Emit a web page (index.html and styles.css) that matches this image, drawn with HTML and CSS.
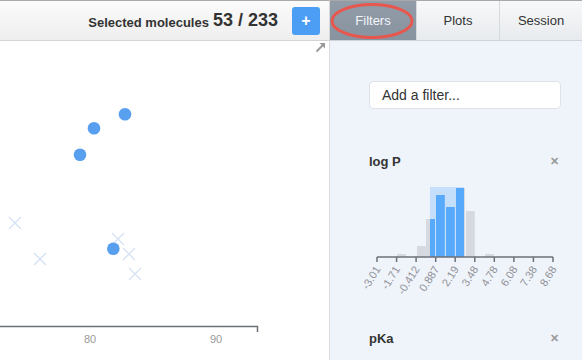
FILE: index.html
```html
<!DOCTYPE html>
<html>
<head>
<meta charset="utf-8">
<link rel="stylesheet" href="styles.css">
</head>
<body>
<div class="app">
  <div class="topbar">
    <span class="sel-label">Selected molecules</span>
    <span class="sel-count">53 / 233</span>
    <button class="add-btn">+</button>
  </div>
  <div class="tabs">
    <div class="tab active">Filters
      <svg class="ring" width="86" height="38" viewBox="0 0 86 38"><ellipse cx="42" cy="19" rx="40" ry="16.5" fill="none" stroke="#e8574d" stroke-width="3"/></svg>
    </div>
    <div class="tab">Plots</div>
    <div class="tab">Session</div>
  </div>
  <div class="plot">
    <svg class="expand" width="11" height="11" viewBox="0 0 11 11"><path d="M1.5 9.5 L8 3" stroke="#9a9a9a" stroke-width="2"/><path d="M4.5 1 H10 V6.5 Z" fill="#9a9a9a"/></svg>
    <svg class="scatter" width="329" height="319" viewBox="0 0 329 319">
      <g stroke="#d4e2f4" stroke-width="1.4">
        <path d="M9 176 l12 12 M21 176 l-12 12"/>
        <path d="M34 212 l12 12 M46 212 l-12 12"/>
        <path d="M112 192 l12 12 M124 192 l-12 12"/>
        <path d="M123 207 l12 12 M135 207 l-12 12"/>
        <path d="M129 227 l12 12 M141 227 l-12 12"/>
      </g>
      <g fill="#58a0ef">
        <circle cx="125" cy="73.3" r="6.3"/>
        <circle cx="94" cy="87.3" r="6.3"/>
        <circle cx="80" cy="113.7" r="6.3"/>
        <circle cx="113.3" cy="207.7" r="6.3"/>
      </g>
      <path d="M0 285.5 H257.5 V291" fill="none" stroke="#6d7078" stroke-width="1.5"/>
      <g fill="#9a9a9a" font-size="11" text-anchor="middle" font-family="Liberation Sans, Arial, sans-serif">
        <text x="90" y="302">80</text>
        <text x="216" y="302">90</text>
      </g>
    </svg>
  </div>
  <div class="panel">
    <div class="filter-input">Add a filter...</div>
    <div class="filter">
      <div class="filter-head"><span class="filter-name">log P</span><span class="close">✕</span></div>
      <svg class="hist" width="192" height="120" viewBox="0 0 192 120">
        <g fill="#d6dae0">
          <rect x="28" y="79" width="8.8" height="3"/>
          <rect x="48" y="71" width="8.8" height="11"/>
          <rect x="57" y="44" width="9" height="38"/>
          <rect x="87" y="13" width="9" height="69"/>
          <rect x="97" y="36" width="8.8" height="46"/>
          <rect x="116" y="79" width="8.8" height="3"/>
        </g>
        <rect x="61" y="12" width="34" height="70" fill="#c5defa"/>
        <g fill="#57a9fc">
          <rect x="61" y="44" width="5" height="38"/>
          <rect x="67" y="20" width="8.8" height="62"/>
          <rect x="77" y="32" width="8.8" height="50"/>
          <rect x="87" y="13" width="8" height="69"/>
        </g>
        <g stroke="#6d7078" stroke-width="1.5" fill="none">
          <path d="M8 82 H184"/>
          <path d="M8 82 v5 M27.6 82 v5 M47.1 82 v5 M66.7 82 v5 M86.2 82 v5 M105.8 82 v5 M125.3 82 v5 M144.9 82 v5 M164.4 82 v5 M184 82 v5"/>
        </g>
        <g fill="#8f9298" font-size="11" text-anchor="end" font-family="Liberation Sans, Arial, sans-serif">
          <text transform="translate(12 94) rotate(-58)">-3.01</text>
          <text transform="translate(31.6 94) rotate(-58)">-1.71</text>
          <text transform="translate(51.1 94) rotate(-58)">-0.412</text>
          <text transform="translate(70.7 94) rotate(-58)">0.887</text>
          <text transform="translate(90.2 94) rotate(-58)">2.19</text>
          <text transform="translate(109.8 94) rotate(-58)">3.48</text>
          <text transform="translate(129.3 94) rotate(-58)">4.78</text>
          <text transform="translate(148.9 94) rotate(-58)">6.08</text>
          <text transform="translate(168.4 94) rotate(-58)">7.38</text>
          <text transform="translate(188 94) rotate(-58)">8.68</text>
        </g>
      </svg>
    </div>
    <div class="filter second">
      <div class="filter-head"><span class="filter-name">pKa</span><span class="close">✕</span></div>
    </div>
  </div>
</div>
</body>
</html>
```
FILE: styles.css
```css
html, body {
  margin: 0;
  padding: 0;
}
body {
  width: 582px;
  height: 360px;
  overflow: hidden;
  font-family: "Liberation Sans", Arial, sans-serif;
  color: #333;
  background: #fff;
}
.app {
  display: grid;
  grid-template-columns: 330px 252px;
  grid-template-rows: 41px 319px;
  height: 360px;
}
.topbar {
  display: flex;
  align-items: center;
  justify-content: flex-end;
  padding-right: 9px;
  box-sizing: border-box;
  border-top: 1px solid #a8a8a8;
  border-bottom: 1px solid #d4d4d4;
  border-right: 1px solid #d8d8d8;
  background: linear-gradient(to bottom, #fbfbfb, #eeeeee);
}
.sel-label {
  font-size: 13px;
  font-weight: bold;
  color: #333;
  margin-right: 4px;
  padding-top: 3px;
}
.sel-count {
  font-size: 18px;
  font-weight: bold;
  color: #333;
}
.add-btn {
  margin-left: 14px;
  width: 28px;
  height: 28px;
  border: none;
  border-radius: 3px;
  background: #4b9ef3;
  color: #fff;
  font-family: "Liberation Sans", Arial, sans-serif;
  font-size: 16px;
  font-weight: bold;
  padding: 0;
  line-height: 28px;
}
.tabs {
  display: flex;
  box-sizing: border-box;
  border-top: 1px solid #a8a8a8;
  border-bottom: 1px solid #cfd3d8;
}
.tab {
  position: relative;
  display: flex;
  align-items: center;
  justify-content: center;
  font-size: 13px;
  color: #333;
  background: linear-gradient(to bottom, #f7f8f9, #e8ebee);
  border-right: 1px solid #d6dadf;
  box-sizing: border-box;
}
.tab:nth-child(1) { width: 87px; }
.tab:nth-child(2) { width: 83px; }
.tab:nth-child(3) { width: 82px; border-right: none; }
.tab.active {
  background: linear-gradient(to bottom, #919ca8, #8893a0);
  color: #f3f5f8;
}
.ring {
  position: absolute;
  left: 0;
  top: 1px;
}
.plot {
  position: relative;
  border-right: 1px solid #dcdcdc;
  background: #fff;
}
.scatter {
  display: block;
}
.expand {
  position: absolute;
  right: 3px;
  top: 1px;
}
.panel {
  background: #eff3fa;
  padding: 40px 21px 0 39px;
  box-sizing: border-box;
}
.filter-input {
  height: 28px;
  box-sizing: border-box;
  background: #fff;
  border: 1px solid #dfe3e9;
  border-radius: 4px;
  font-size: 14px;
  color: #333;
  padding-left: 12px;
  line-height: 26px;
}
.filter {
  margin-top: 44px;
}
.filter.second {
  margin-top: 35px;
}
.filter-head {
  display: flex;
  justify-content: space-between;
  align-items: center;
  height: 16px;
}
.filter-name {
  font-size: 13px;
  font-weight: bold;
  color: #333;
}
.close {
  font-size: 11px;
  font-weight: bold;
  color: #9a9a9a;
  margin-right: 2px;
}
.hist {
  display: block;
  margin-top: 6px;
  overflow: visible;
}
```
